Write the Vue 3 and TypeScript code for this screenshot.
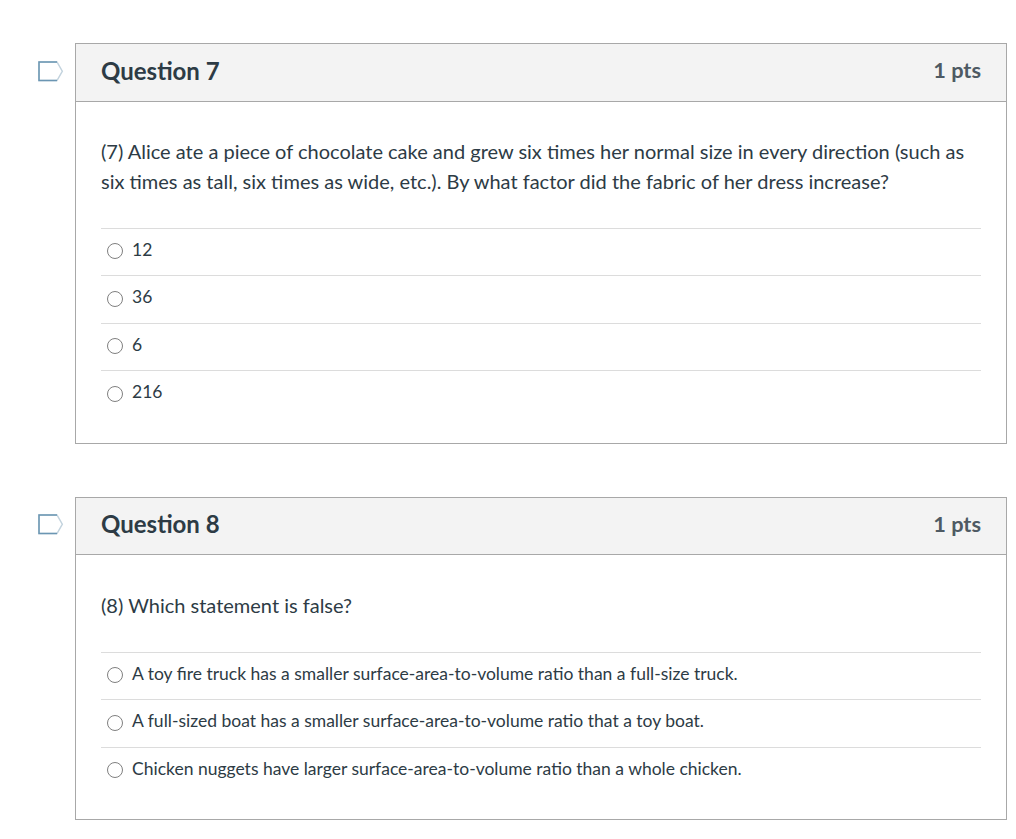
<script setup lang="ts">
interface Question { title: string; text: string; answers: string[] }
const questions: Question[] = [
  {
    title: 'Question 7',
    text: '(7) Alice ate a piece of chocolate cake and grew six times her normal size in every direction (such as six times as tall, six times as wide, etc.). By what factor did the fabric of her dress increase?',
    answers: ['12', '36', '6', '216']
  },
  {
    title: 'Question 8',
    text: '(8) Which statement is false?',
    answers: [
      'A toy fire truck has a smaller surface-area-to-volume ratio than a full-size truck.',
      'A full-sized boat has a smaller surface-area-to-volume ratio that a toy boat.',
      'Chicken nuggets have larger surface-area-to-volume ratio than a whole chicken.'
    ]
  }
]
</script>

<template>
  <main class="page">
    <section v-for="q in questions" :key="q.title" class="card">
      <svg class="flag" width="26" height="21" viewBox="0 0 26 21">
        <path d="M1 1H19L24.3 10.25L19 19.5H1Z" fill="#fff" stroke="#c3d3de" stroke-width="1.5" />
        <path d="M19 1H1V19.5H19" fill="none" stroke="#6b96b3" stroke-width="1.5" />
      </svg>
      <header class="head">
        <h2>{{ q.title }}</h2>
        <span class="pts">1 pts</span>
      </header>
      <div class="body">
        <p class="text">{{ q.text }}</p>
        <ul class="answers">
          <li v-for="a in q.answers" :key="a"><span class="radio"></span>{{ a }}</li>
        </ul>
      </div>
    </section>
  </main>
</template>

<style>
html, body { background: #fff; }
</style>

<style scoped>
.page {
  width: 932px;
  margin-left: 75px;
  padding-top: 43px;
  display: flex;
  flex-direction: column;
  gap: 53.3px;
  font-family: Lato, "Open Sans", sans-serif;
  color: #2d3b45;
}
.card {
  position: relative;
  border: 1px solid #a8a8a8;
  box-sizing: border-box;
}
.flag {
  position: absolute;
  left: -38px;
  top: 16.5px;
}
.head {
  height: 57.5px;
  box-sizing: border-box;
  background: #f3f3f3;
  border-bottom: 1px solid #a8a8a8;
  padding: 0 25px 4.4px;
  display: flex;
  align-items: center;
  justify-content: space-between;
}
h2 {
  margin: 0;
  font-size: 24px;
  font-weight: 700;
  color: #2d3b45;
}
.pts {
  font-size: 21.75px;
  font-weight: 700;
  color: #4e5a63;
}
.body {
  padding: 34.5px 25px 24.9px;
}
.text {
  margin: 0;
  font-size: 20px;
  line-height: 30px;
  color: #2d3b45;
}
.answers {
  list-style: none;
  margin: 31.7px 0 0;
  padding: 0;
}
.answers li {
  border-top: 1px solid #dcdcdc;
  height: 47.5px;
  box-sizing: border-box;
  display: flex;
  align-items: center;
  font-size: 17.5px;
  padding: 0 0 5px 5.5px;
}
.radio {
  width: 16px;
  height: 16px;
  box-sizing: border-box;
  border: 1.3px solid #808080;
  border-radius: 50%;
  margin: 3.5px 9.5px 0 0;
  flex: none;
}
</style>
